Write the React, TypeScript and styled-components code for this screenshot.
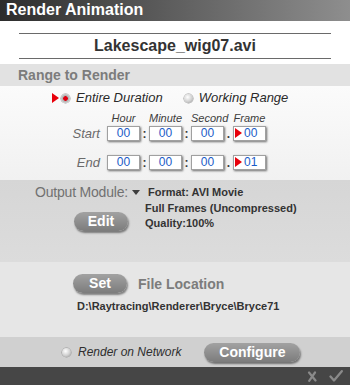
import React, { FC, ReactElement } from "react";
import styled, { createGlobalStyle } from "styled-components";

const GlobalStyle = createGlobalStyle`
  html, body {
    margin: 0;
    padding: 0;
    background: #464646;
  }
  body {
    font-family: "Liberation Sans", Arial, sans-serif;
  }
`;

const HEADERS = ["Hour", "Minute", "Second", "Frame"];

type TimeValues = [string, string, string, string];

const TimeLine: FC<{ label: string; values: TimeValues; top: number }> = ({
  label,
  values,
  top,
}): ReactElement => (
  <TimeRow $top={top}>
    <RowLabel>{label}</RowLabel>
    <Field>{values[0]}</Field>
    <Sep>:</Sep>
    <Field>{values[1]}</Field>
    <Sep>:</Sep>
    <Field>{values[2]}</Field>
    <Sep>.</Sep>
    <Field $frame>
      <RedArrow $small />
      <span>{values[3]}</span>
    </Field>
  </TimeRow>
);

const CrossIcon: FC = (): ReactElement => (
  <svg width="10" height="11" viewBox="0 0 10 11">
    <path
      d="M2 1.5 L8.5 9.5 M8 1.5 L2.2 9.8"
      stroke="#8a8a8a"
      strokeWidth="2.2"
      strokeLinecap="round"
      fill="none"
    />
  </svg>
);

const CheckIcon: FC = (): ReactElement => (
  <svg width="14" height="12" viewBox="0 0 14 12">
    <path
      d="M1.5 6.5 L5 10.5 L12.8 1.2"
      stroke="#8a8a8a"
      strokeWidth="2.3"
      strokeLinecap="round"
      strokeLinejoin="round"
      fill="none"
    />
  </svg>
);

const App: FC = (): ReactElement => {
  return (
    <>
      <GlobalStyle />
      <Window>
        <TitleBar>Render Animation</TitleBar>

        <FileSection>
          <FileName>Lakescape_wig07.avi</FileName>
        </FileSection>

        <SectionHeader>Range to Render</SectionHeader>

        <RangeBody>
          <OptionRow>
            <RedArrow />
            <Radio $selected />
            <OptionText>Entire Duration</OptionText>
            <Radio $gap={21} />
            <OptionText>Working Range</OptionText>
          </OptionRow>

          <HeaderRow>
            {HEADERS.map((h, i) => (
              <HeaderCell key={h} $col={2 + i * 2}>
                {h}
              </HeaderCell>
            ))}
          </HeaderRow>
          <TimeLine label="Start" values={["00", "00", "00", "00"]} top={0} />
          <TimeLine label="End" values={["00", "00", "00", "01"]} top={14} />
        </RangeBody>

        <OutputSection>
          <ModuleRow>
            <ModuleLabel>Output Module:</ModuleLabel>
            <DownArrow />
            <InfoText>Format: AVI Movie</InfoText>
          </ModuleRow>
          <EditRow>
            <PillButton $width={54} $top={11}>
              Edit
            </PillButton>
            <InfoBlock>
              <InfoText>Full Frames (Uncompressed)</InfoText>
              <InfoText>Quality:100%</InfoText>
            </InfoBlock>
          </EditRow>
        </OutputSection>

        <LocationSection>
          <LocationRow>
            <PillButton $width={54} $top={11}>
              Set
            </PillButton>
            <LocationTitle>File Location</LocationTitle>
          </LocationRow>
          <PathText>D:\Raytracing\Renderer\Bryce\Bryce71</PathText>
        </LocationSection>

        <NetworkRow>
          <Radio />
          <NetworkText>Render on Network</NetworkText>
          <PillButton $width={96} $left={23}>
            Configure
          </PillButton>
        </NetworkRow>

        <Footer>
          <CrossIcon />
          <CheckIcon />
        </Footer>
      </Window>
    </>
  );
};

export default App;

const Window = styled.div`
  width: 350px;
  height: 385px;
  display: flex;
  flex-direction: column;
  overflow: hidden;
  background: #ffffff;
`;

const TitleBar = styled.div`
  height: 21px;
  flex: none;
  box-sizing: border-box;
  padding-left: 6px;
  background: linear-gradient(to right, #2c2c2c 0%, #5a5a5a 45%, #8e8e8e 100%);
  color: #ffffff;
  font-size: 16px;
  font-weight: bold;
  line-height: 19px;
`;

const FileSection = styled.div`
  height: 43px;
  flex: none;
  box-sizing: border-box;
  padding: 12px 19px 0;
  background: #ffffff;
`;

const FileName = styled.div`
  border-top: 1px solid #6a6a6a;
  border-bottom: 1px solid #6a6a6a;
  height: 24px;
  line-height: 24px;
  text-align: center;
  font-size: 16px;
  font-weight: bold;
  color: #333333;
`;

const SectionHeader = styled.div`
  height: 22px;
  flex: none;
  box-sizing: border-box;
  padding-left: 18px;
  background: #e2e2e2;
  color: #7c7c7c;
  font-size: 14px;
  font-weight: bold;
  line-height: 22px;
`;

const RangeBody = styled.div`
  height: 94px;
  flex: none;
  box-sizing: border-box;
  padding-top: 4px;
  background: linear-gradient(#fbfbfb, #f1f1f1);
`;

const OptionRow = styled.div`
  display: flex;
  align-items: center;
  height: 16px;
  padding-left: 52px;
`;

const RedArrow = styled.span<{ $small?: boolean }>`
  flex: none;
  width: 0;
  height: 0;
  border-top: ${(p) => (p.$small ? 5 : 5.5)}px solid transparent;
  border-bottom: ${(p) => (p.$small ? 5 : 5.5)}px solid transparent;
  border-left: 7px solid #e8000b;
  margin-right: 2px;
`;

const Radio = styled.span<{ $selected?: boolean; $gap?: number }>`
  flex: none;
  width: 9px;
  height: 9px;
  border-radius: 50%;
  margin-left: ${(p) => p.$gap ?? 0}px;
  background: ${(p) =>
    p.$selected
      ? "radial-gradient(circle at 50% 50%, #e00010 0 2px, #b0b0b0 2.6px, #e6e6e6 100%)"
      : "radial-gradient(circle at 40% 35%, #ffffff 0, #d0d0d0 55%, #8e8e8e 100%)"};
  box-shadow: 0 0 0 0.5px #9a9a9a;
`;

const OptionText = styled.span`
  margin-left: 6px;
  font-size: 13px;
  font-style: italic;
  color: #2a2a2a;
  line-height: 16px;
`;

const gridColumns = "107px 33px 9px 33px 9px 33px 9px 33px";

const HeaderRow = styled.div`
  display: grid;
  grid-template-columns: ${gridColumns};
  margin-top: 7px;
  height: 11px;
`;

const HeaderCell = styled.span<{ $col: number }>`
  grid-column: ${(p) => p.$col};
  text-align: center;
  font-size: 11px;
  font-style: italic;
  color: #3c3c3c;
  line-height: 11px;
  white-space: nowrap;
`;

const TimeRow = styled.div<{ $top: number }>`
  display: grid;
  grid-template-columns: ${gridColumns};
  align-items: center;
  height: 15px;
  margin-top: ${(p) => p.$top}px;
`;

const RowLabel = styled.span`
  padding-right: 7px;
  text-align: right;
  font-size: 13px;
  font-style: italic;
  color: #6a6a6a;
`;

const Field = styled.span<{ $frame?: boolean }>`
  box-sizing: border-box;
  height: 15px;
  display: flex;
  align-items: center;
  justify-content: ${(p) => (p.$frame ? "flex-start" : "center")};
  padding-left: ${(p) => (p.$frame ? 1 : 0)}px;
  background: #ffffff;
  border: 1px solid #a0a0a0;
  box-shadow: 1px 1px 2px rgba(0, 0, 0, 0.55);
  font-size: 12px;
  color: #1a5cc8;
`;

const Sep = styled.span`
  text-align: center;
  font-size: 12px;
  font-weight: bold;
  color: #3a3a3a;
  line-height: 15px;
  padding-top: 3px;
`;

const OutputSection = styled.div`
  height: 82px;
  flex: none;
  box-sizing: border-box;
  padding: 4px 0 0 35px;
  background: linear-gradient(#d6d6d6, #dcdcdc);
`;

const ModuleRow = styled.div`
  display: flex;
  align-items: center;
  height: 16px;
`;

const ModuleLabel = styled.span`
  font-size: 14px;
  letter-spacing: -0.2px;
  color: #717171;
`;

const DownArrow = styled.span`
  flex: none;
  width: 0;
  height: 0;
  margin: 1px 8px 0 4px;
  border-left: 4px solid transparent;
  border-right: 4px solid transparent;
  border-top: 5px solid #3e3e3e;
`;

const InfoText = styled.div`
  font-size: 11px;
  font-weight: bold;
  color: #333333;
  line-height: 15px;
  white-space: nowrap;
`;

const EditRow = styled.div`
  display: flex;
  align-items: flex-start;
  padding-left: 39px;
  margin-top: 1px;
`;

const InfoBlock = styled.div`
  margin-left: 17px;
`;

const PillButton = styled.div<{ $width: number; $top?: number; $left?: number }>`
  flex: none;
  width: ${(p) => p.$width}px;
  height: 19px;
  box-sizing: border-box;
  margin-top: ${(p) => p.$top ?? 0}px;
  margin-left: ${(p) => p.$left ?? 0}px;
  border-radius: 10px;
  background: linear-gradient(#a2a2a2, #7c7c7c);
  box-shadow: 1px 2px 2px rgba(0, 0, 0, 0.45);
  color: #ffffff;
  font-size: 14px;
  font-weight: bold;
  line-height: 19px;
  text-align: center;
`;

const LocationSection = styled.div`
  height: 75px;
  flex: none;
  box-sizing: border-box;
  padding: 1px 0 0 73px;
  background: #e6e6e6;
`;

const LocationRow = styled.div`
  display: flex;
  align-items: flex-end;
`;

const LocationTitle = styled.span`
  margin-left: 11px;
  font-size: 14px;
  font-weight: bold;
  color: #7c7c7c;
  line-height: 18px;
`;

const PathText = styled.div`
  margin: 6px 0 0 4px;
  font-size: 11px;
  font-weight: bold;
  color: #333333;
  line-height: 14px;
`;

const NetworkRow = styled.div`
  height: 30px;
  flex: none;
  box-sizing: border-box;
  display: flex;
  align-items: center;
  padding-left: 62px;
  background: #d0d0d0;
`;

const NetworkText = styled.span`
  margin-left: 7px;
  font-size: 12px;
  font-style: italic;
  color: #2e2e2e;
`;

const Footer = styled.div`
  flex: 1;
  display: flex;
  align-items: center;
  justify-content: flex-end;
  gap: 12px;
  padding-right: 7px;
  background: #464646;
`;
